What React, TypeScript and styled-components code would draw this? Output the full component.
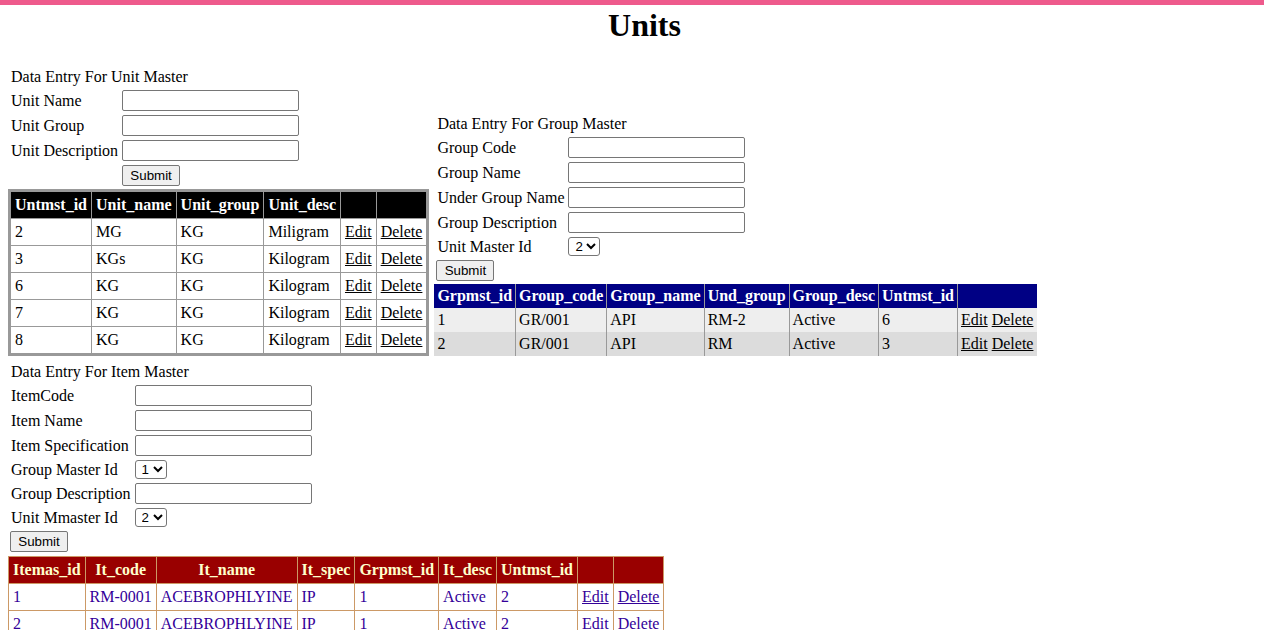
import React from "react";
import styled, { createGlobalStyle, css } from "styled-components";

const GlobalStyle = createGlobalStyle`
  html, body { margin: 0; padding: 0; background: #ffffff; }
  body {
    font-family: "Liberation Serif", "Times New Roman", serif;
    font-size: 16px;
    color: #000000;
  }
`;

const TopBar = styled.div`
  height: 5px;
  background: #ee5a8c;
`;

const Page = styled.div`
  padding: 0 8px;
`;

const Title = styled.h1`
  margin: 2px 0 24px;
  padding-left: 25px;
  text-align: center;
  font-size: 32px;
  line-height: 37px;
  font-weight: bold;
`;

const TopRow = styled.div`
  display: flex;
  align-items: flex-end;
  gap: 5px;
`;

const Section = styled.section<{ $gap?: number }>`
  display: flex;
  flex-direction: column;
  align-items: flex-start;
  margin-top: ${(p) => p.$gap ?? 0}px;
`;

const FormGrid = styled.div`
  display: grid;
  grid-template-columns: auto auto;
  column-gap: 4px;
  row-gap: 4px;
  padding-left: 3px;
  align-items: center;
  justify-items: start;
`;

const FormTitle = styled.div`
  grid-column: 1 / -1;
  line-height: 18px;
`;

const Label = styled.label`
  line-height: 18px;
  white-space: nowrap;
`;

const TextInput = styled.input`
  box-sizing: border-box;
  width: 177px;
  height: 21px;
  margin: 0;
  padding: 1px 2px;
  border: 1px solid #767676;
  border-radius: 2px;
  background: #ffffff;
  font-family: "Liberation Sans", Arial, sans-serif;
  font-size: 13.33px;
`;

const Select = styled.select`
  box-sizing: border-box;
  width: 32px;
  height: 19px;
  margin: 0;
  padding: 0 0 0 2px;
  border: 1px solid #767676;
  border-radius: 3px;
  background: #ffffff;
  color: #000000;
  font-family: "Liberation Sans", Arial, sans-serif;
  font-size: 13.33px;
`;

const SubmitButton = styled.button<{ $inField?: boolean }>`
  grid-column: ${(p) => (p.$inField ? "2" : "1")};
  margin: 0 0 0 ${(p) => (p.$inField ? 0 : -1)}px;
  box-sizing: border-box;
  height: 21px;
  width: 58px;
  padding: 1px 6px;
  border: 1px solid #767676;
  border-radius: 2px;
  background: #efefef;
  color: #000000;
  font-family: "Liberation Sans", Arial, sans-serif;
  font-size: 13.33px;
`;

type GridKind = "unit" | "group" | "item";

const GridTable = styled.table<{ $kind: GridKind; $top: number }>`
  border-collapse: collapse;
  margin-top: ${(p) => p.$top}px;
  font-size: 16px;
  line-height: 18px;

  th {
    font-weight: bold;
    text-align: center;
    white-space: nowrap;
  }
  td {
    text-align: left;
    white-space: nowrap;
  }
  a {
    color: inherit;
    text-decoration: underline;
    cursor: pointer;
  }

  ${(p) =>
    p.$kind === "unit" &&
    css`
      border: 3px solid #999999;
      th, td { padding: 4px; border: 1px solid #999999; }
      th { background: #000000; color: #ffffff; }
      td { background: #ffffff; color: #000000; }
    `}

  ${(p) =>
    p.$kind === "group" &&
    css`
      border: none;
      th, td { padding: 3px; }
      th + th, td + td { border-left: 1px solid #999999; }
      th:last-child, td:last-child { padding-right: 4px; }
      th { background: #000084; color: #ffffff; }
      tbody tr:nth-child(odd) td { background: #eeeeee; }
      tbody tr:nth-child(even) td { background: #dcdcdc; }
      td { color: #000000; }
    `}

  ${(p) =>
    p.$kind === "item" &&
    css`
      th, td { padding: 4px; border: 1px solid #cc9966; }
      th { background: #990000; color: #ffffcc; }
      td { background: #ffffff; color: #330099; }
    `}
`;

const unitRows = [
  ["2", "MG", "KG", "Miligram"],
  ["3", "KGs", "KG", "Kilogram"],
  ["6", "KG", "KG", "Kilogram"],
  ["7", "KG", "KG", "Kilogram"],
  ["8", "KG", "KG", "Kilogram"],
];

const groupRows = [
  ["1", "GR/001", "API", "RM-2", "Active", "6"],
  ["2", "GR/001", "API", "RM", "Active", "3"],
];

const itemRows = [
  ["1", "RM-0001", "ACEBROPHLYINE", "IP", "1", "Active", "2"],
  ["2", "RM-0001", "ACEBROPHLYINE", "IP", "1", "Active", "2"],
];

export default function App() {
  return (
    <>
      <GlobalStyle />
      <TopBar />
      <Page>
        <Title>Units</Title>
        <TopRow>
          <Section>
            <FormGrid>
              <FormTitle>Data Entry For Unit Master</FormTitle>
              <Label>Unit Name</Label>
              <TextInput type="text" />
              <Label>Unit Group</Label>
              <TextInput type="text" />
              <Label>Unit Description</Label>
              <TextInput type="text" />
              <SubmitButton $inField>Submit</SubmitButton>
            </FormGrid>
            <GridTable $kind="unit" $top={3}>
              <thead>
                <tr>
                  <th>Untmst_id</th>
                  <th>Unit_name</th>
                  <th>Unit_group</th>
                  <th>Unit_desc</th>
                  <th>&nbsp;</th>
                  <th>&nbsp;</th>
                </tr>
              </thead>
              <tbody>
                {unitRows.map((r, i) => (
                  <tr key={i}>
                    {r.map((c, j) => (
                      <td key={j}>{c}</td>
                    ))}
                    <td>
                      <a>Edit</a>
                    </td>
                    <td>
                      <a>Delete</a>
                    </td>
                  </tr>
                ))}
              </tbody>
            </GridTable>
          </Section>

          <Section>
            <FormGrid>
              <FormTitle>Data Entry For Group Master</FormTitle>
              <Label>Group Code</Label>
              <TextInput type="text" />
              <Label>Group Name</Label>
              <TextInput type="text" />
              <Label>Under Group Name</Label>
              <TextInput type="text" />
              <Label>Group Description</Label>
              <TextInput type="text" />
              <Label>Unit Master Id</Label>
              <Select defaultValue="2">
                <option value="2">2</option>
                <option value="3">3</option>
                <option value="6">6</option>
                <option value="7">7</option>
                <option value="8">8</option>
              </Select>
              <SubmitButton>Submit</SubmitButton>
            </FormGrid>
            <GridTable $kind="group" $top={3}>
              <thead>
                <tr>
                  <th>Grpmst_id</th>
                  <th>Group_code</th>
                  <th>Group_name</th>
                  <th>Und_group</th>
                  <th>Group_desc</th>
                  <th>Untmst_id</th>
                  <th>&nbsp;</th>
                </tr>
              </thead>
              <tbody>
                {groupRows.map((r, i) => (
                  <tr key={i}>
                    {r.map((c, j) => (
                      <td key={j}>{c}</td>
                    ))}
                    <td>
                      <a>Edit</a> <a>Delete</a>
                    </td>
                  </tr>
                ))}
              </tbody>
            </GridTable>
          </Section>
        </TopRow>

        <Section $gap={7}>
          <FormGrid>
            <FormTitle>Data Entry For Item Master</FormTitle>
            <Label>ItemCode</Label>
            <TextInput type="text" />
            <Label>Item Name</Label>
            <TextInput type="text" />
            <Label>Item Specification</Label>
            <TextInput type="text" />
            <Label>Group Master Id</Label>
            <Select defaultValue="1">
              <option value="1">1</option>
              <option value="2">2</option>
            </Select>
            <Label>Group Description</Label>
            <TextInput type="text" />
            <Label>Unit Mmaster Id</Label>
            <Select defaultValue="2">
              <option value="2">2</option>
              <option value="3">3</option>
            </Select>
            <SubmitButton>Submit</SubmitButton>
          </FormGrid>
          <GridTable $kind="item" $top={4}>
            <thead>
              <tr>
                <th>Itemas_id</th>
                <th>It_code</th>
                <th>It_name</th>
                <th>It_spec</th>
                <th>Grpmst_id</th>
                <th>It_desc</th>
                <th>Untmst_id</th>
                <th>&nbsp;</th>
                <th>&nbsp;</th>
              </tr>
            </thead>
            <tbody>
              {itemRows.map((r, i) => (
                <tr key={i}>
                  {r.map((c, j) => (
                    <td key={j}>{c}</td>
                  ))}
                  <td>
                    <a>Edit</a>
                  </td>
                  <td>
                    <a>Delete</a>
                  </td>
                </tr>
              ))}
            </tbody>
          </GridTable>
        </Section>
      </Page>
    </>
  );
}
